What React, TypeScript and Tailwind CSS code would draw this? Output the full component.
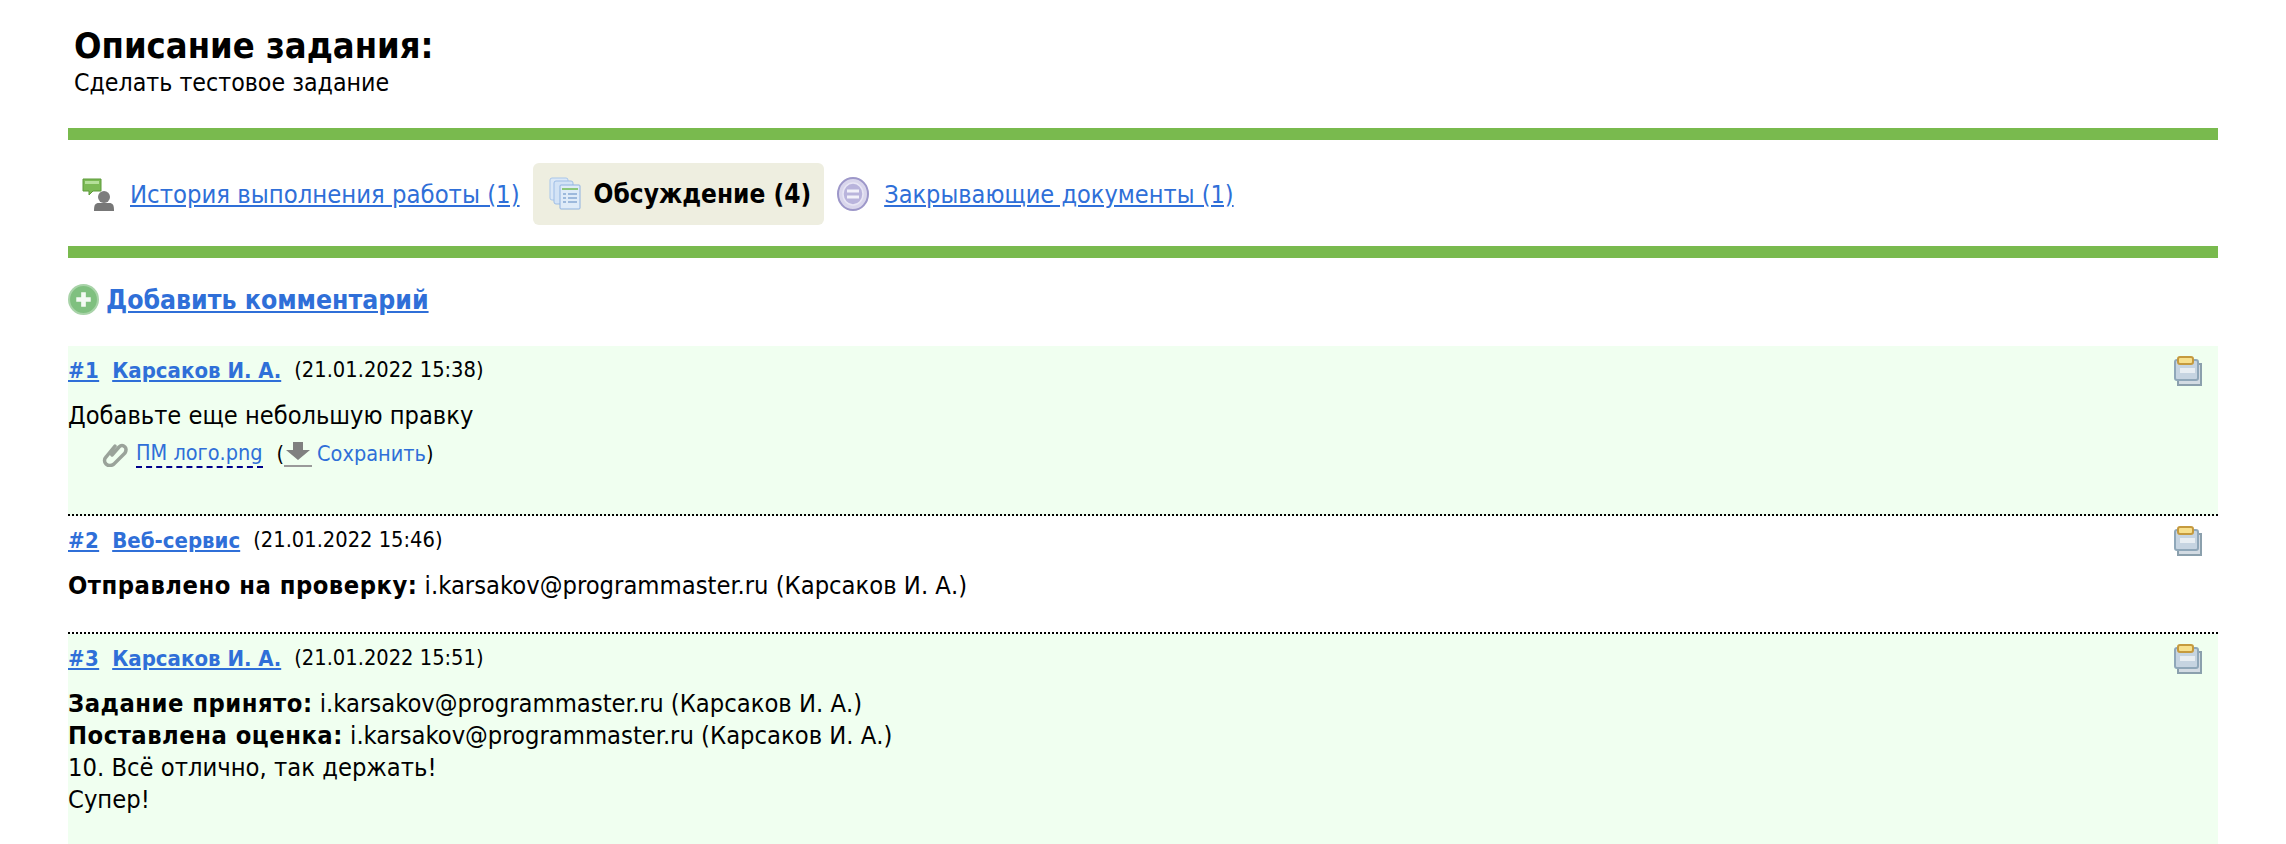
import React from "react";

const linkClass = "text-[#2f6fd8] underline";

function HistoryIcon() {
  return (
    <svg width="32" height="33" viewBox="0 0 32 33" className="shrink-0">
      <path d="M1 1h18v12h-8l-4 4v-4H1z" fill="#7cba55" stroke="#5d9a3a" />
      <rect x="3" y="3" width="14" height="3" fill="#b5e09a" />
      <circle cx="22" cy="19" r="6" fill="#7d7d7d" />
      <path d="M12 33c0-6 1-8 5-8h10c4 0 5 2 5 8z" fill="#777" />
    </svg>
  );
}

function DiscussIcon() {
  return (
    <svg width="32" height="33" viewBox="0 0 32 33" className="shrink-0">
      <rect x="1" y="1" width="18" height="22" rx="2" fill="#dbe8f7" stroke="#a9c6ea" />
      <rect x="5" y="4" width="19" height="23" rx="2" fill="#d3e3f6" stroke="#9dbde6" />
      <rect x="11" y="8" width="20" height="24" rx="1" fill="#dfebf8" stroke="#8fb2e0" />
      <rect x="13" y="11" width="16" height="2" fill="#8bc77a" />
      <path d="M14 16h3v2h-3zM19 16h9v2h-9zM14 20h3v2h-3zM19 20h9v2h-9zM14 24h3v2h-3zM19 24h9v2h-9z" fill="#9db9dc" />
    </svg>
  );
}

function DocsIcon() {
  return (
    <svg width="32" height="34" viewBox="0 0 32 34" className="shrink-0">
      <ellipse cx="16" cy="17" rx="15" ry="16" fill="#d9d6ec" stroke="#9d97c9" strokeWidth="2" />
      <ellipse cx="16" cy="17" rx="10" ry="11" fill="#b9b4dc" stroke="#e8e6f5" strokeWidth="1.500" />
      <rect x="10" y="12.500" width="12" height="3" fill="#f2f1fa" />
      <rect x="10" y="18.500" width="12" height="3" fill="#f2f1fa" />
    </svg>
  );
}

function AddIcon() {
  return (
    <svg width="31" height="31" viewBox="0 0 30 30" className="shrink-0">
      <circle cx="15" cy="15" r="14" fill="#7fc07f" stroke="#a8d3a8" strokeWidth="2" />
      <path d="M15 8v14M8 15h14" stroke="#f3faf3" strokeWidth="4.500" />
    </svg>
  );
}

function CopyIcon() {
  return (
    <svg width="28" height="30" viewBox="0 0 28 30" className="shrink-0">
      <rect x="4" y="8" width="23" height="21" fill="#d3dbe3" stroke="#8ba0ad" strokeWidth="2" />
      <rect x="1" y="4" width="23" height="20" rx="2" fill="#c6d4e1" stroke="#8fa7b9" strokeWidth="2" />
      <rect x="6" y="12" width="15" height="5" fill="#e8eef3" />
      <rect x="4" y="1" width="15" height="7" rx="2" fill="#f7e08d" stroke="#c59a3e" strokeWidth="2" />
    </svg>
  );
}

function ClipIcon() {
  return (
    <svg width="26" height="26" viewBox="0 0 26 26" className="shrink-0">
      <path d="M10 14l7-8c2-2 4-2 6 0s1 4 0 6L12 23c-3 2-6 2-8 0s-2-5 0-7l9-11" fill="none" stroke="#9aa39a" strokeWidth="3.500" strokeLinecap="round" />
    </svg>
  );
}

function SaveIcon() {
  return (
    <svg width="28" height="26" viewBox="0 0 28 26" className="shrink-0">
      <path d="M9 1h10v8h7L14 19 2 9h7z" fill="#808080" />
      <rect x="0" y="24" width="28" height="2" fill="#9a9a9a" />
    </svg>
  );
}

function CommentHead({ num, author, date }: { num: string; author: string; date: string }) {
  return (
    <div className="flex items-center justify-between pr-[16px] h-[32px]">
      <div className="flex items-center text-[22px] -mt-[2px]">
        <a className={`${linkClass} font-bold tracking-[0.4px]`}>#{num}</a>
        <a className={`${linkClass} font-bold ml-[13px]`}>{author}</a>
        <span className="ml-[13px] text-black text-[21.7px]">({date})</span>
      </div>
      <CopyIcon />
    </div>
  );
}

export default function App() {
  return (
    <div className="h-[844px] overflow-hidden bg-white text-black px-[68px] font-['DejaVu_Sans_Condensed','DejaVu_Sans',sans-serif]">
      <div className="pl-[6px] pt-[23px]">
        <h2 className="text-[36px] leading-[46px] font-bold">Описание задания:</h2>
        <p className="text-[24.7px] leading-[30px] -mt-[1px]">Сделать тестовое задание</p>
      </div>

      <div className="h-[12px] bg-[#79ba4e] mt-[30px]" />
      <div className="h-[106px] flex items-center pt-[1px]">
        <div className="flex items-center gap-[16px] pl-[14px] pr-[13px] text-[25.4px] pt-[2px]">
          <HistoryIcon />
          <a className={linkClass}>История выполнения работы (1)</a>
        </div>
        <div className="flex items-center gap-[13px] h-[62px] pl-[16px] pr-[13px] rounded-[6px] bg-[#eeeee0] font-bold text-[26px]">
          <DiscussIcon />
          <span className="pt-[2px]">Обсуждение (4)</span>
        </div>
        <div className="flex items-center gap-[15px] pl-[13px] text-[25.1px] pt-[2px]">
          <DocsIcon />
          <a className={linkClass}>Закрывающие документы (1)</a>
        </div>
      </div>
      <div className="h-[12px] bg-[#79ba4e]" />

      <div className="flex items-center gap-[7px] h-[88px] pb-[5px] text-[26.4px] font-bold">
        <AddIcon />
        <a className={linkClass}>Добавить комментарий</a>
      </div>

      <div className="bg-[#f0fff0] h-[170px] pt-[9px] border-b-2 border-dotted border-black">
        <CommentHead num="1" author="Карсаков И. А." date="21.01.2022 15:38" />
        <p className="text-[25.2px] leading-[32px] mt-[13px]">Добавьте еще небольшую правку</p>
        <div className="flex items-center text-[21.5px] mt-[6px] pl-[34px]">
          <ClipIcon />
          <a className="ml-[8px] text-[#2f6fd8] border-b-2 border-dashed border-[#00008b] leading-[26px]">ПМ лого.png</a>
          <span className="ml-[14px]">(</span>
          <SaveIcon />
          <a className="ml-[5px] text-[#2f6fd8]">Сохранить</a>
          <span>)</span>
        </div>
      </div>

      <div className="h-[118px] pt-[9px] border-b-2 border-dotted border-black">
        <CommentHead num="2" author="Веб-сервис" date="21.01.2022 15:46" />
        <p className="text-[25.3px] leading-[32px] mt-[13px]"><b className="tracking-[0.5px]">Отправлено на проверку:</b> i.karsakov@programmaster.ru (Карсаков И. А.)</p>
      </div>

      <div className="bg-[#f0fff0] h-[210px] pt-[9px]">
        <CommentHead num="3" author="Карсаков И. А." date="21.01.2022 15:51" />
        <div className="text-[25.3px] leading-[32px] mt-[13px]">
          <p><b className="tracking-[0.5px]">Задание принято:</b> i.karsakov@programmaster.ru (Карсаков И. А.)</p>
          <p><b className="tracking-[0.5px]">Поставлена оценка:</b> i.karsakov@programmaster.ru (Карсаков И. А.)</p>
          <p>10. Всё отлично, так держать!</p>
          <p>Супер!</p>
        </div>
      </div>
    </div>
  );
}
